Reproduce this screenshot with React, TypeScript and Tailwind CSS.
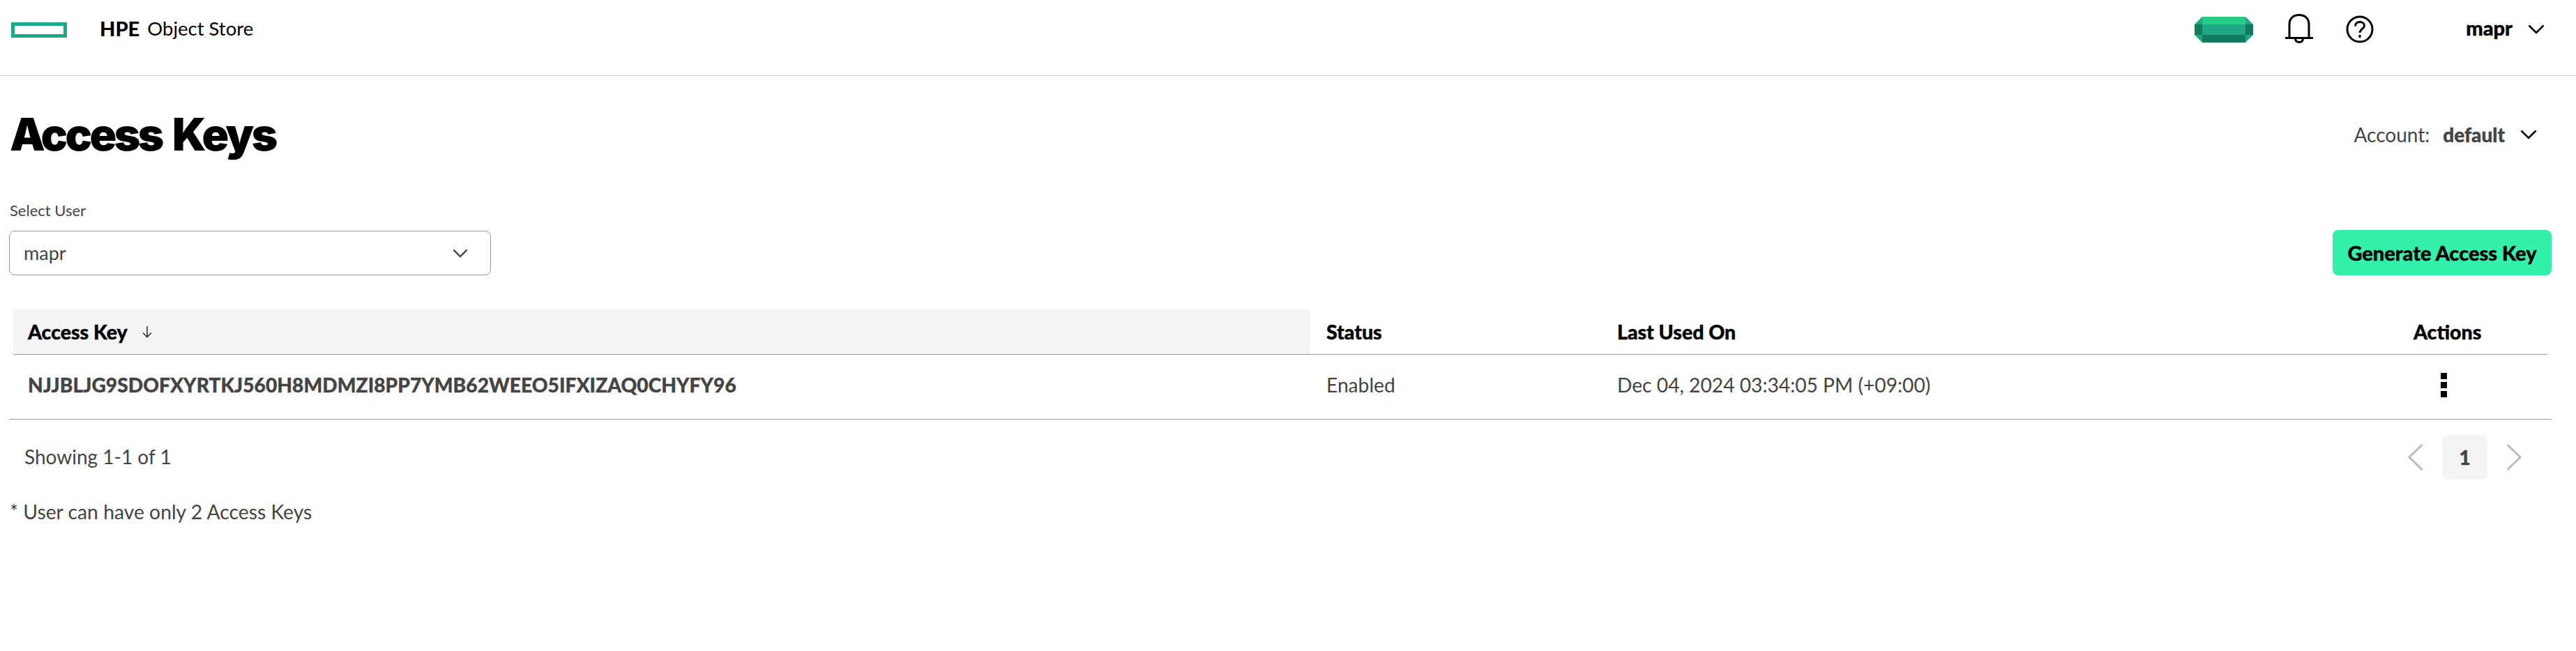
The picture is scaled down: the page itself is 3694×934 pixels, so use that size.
import { useState } from "react";

const BODY = "font-['Lato','Open_Sans',sans-serif]";

function Chevron({ className = "" }: { className?: string }) {
  return (
    <svg viewBox="0 0 24 14" fill="none" stroke="currentColor" strokeWidth="2.6" className={className}>
      <path d="M1.5 1.5 12 12 22.5 1.5" />
    </svg>
  );
}

function Gem() {
  return (
    <svg viewBox="0 0 84 37" className="w-[84px] h-[37px]">
      <polygon points="11,0 73,0 73,11 11,11" fill="#27CB88" />
      <polygon points="11,11 73,11 73,26 11,26" fill="#1FA883" />
      <polygon points="11,26 73,26 73,37 11,37" fill="#127A5E" />
      <polygon points="11,0 11,11 0,11" fill="#1FA883" />
      <polygon points="0,11 11,11 11,26 0,26" fill="#127A5E" />
      <polygon points="0,26 11,26 11,37" fill="#1FA883" />
      <polygon points="73,0 84,11 73,11" fill="#1FA883" />
      <polygon points="73,11 84,11 84,26 73,26" fill="#127A5E" />
      <polygon points="73,26 84,26 73,37" fill="#1FA883" />
    </svg>
  );
}

function Bell() {
  return (
    <svg viewBox="0 0 40 42" fill="none" stroke="#000" strokeWidth="3" className="w-10 h-[42px]">
      <path d="M6 34V15C6 6.5 11.5 1.5 20 1.5S34 6.5 34 15V34" />
      <path d="M0 34.5H40" />
      <path d="M14.5 35C14.5 39 17 40.5 20 40.5S25.5 39 25.5 35" />
    </svg>
  );
}

function Help() {
  return (
    <svg viewBox="0 0 40 40" fill="none" stroke="#000" strokeWidth="3" className="w-10 h-10">
      <circle cx="20" cy="20" r="18" />
      <path d="M13.5 15.5C13.5 11.5 16.5 9.5 20 9.5S26.5 11.5 26.5 15C26.5 19 20 20 20 25" />
      <path d="M20 28V32" />
    </svg>
  );
}

export default function App() {
  const [user] = useState("mapr");

  return (
    <div className={`min-h-[934px] bg-white text-[#444] ${BODY}`}>
      <header className="h-[109px] border-b border-[#ccc] flex items-start text-black">
        <div className="ml-4 mt-8 w-20 h-[22px] border-[5px] border-[#1AAC8A]" />
        <div className="ml-[47px] mt-[21px] text-[29px] leading-[40px] flex">
          <span className="font-black">HPE</span>
          <span className="ml-[11px] text-[27.5px]">Object Store</span>
        </div>
        <div className="ml-auto mt-[20px] flex items-start">
          <div className="mt-1">
            <Gem />
          </div>
          <div className="ml-[46px]">
            <Bell />
          </div>
          <div className="ml-[47px] mt-[2px]">
            <Help />
          </div>
          <span className="ml-[132px] text-[29px] leading-[40px] font-black [-webkit-text-stroke:0.4px]">{user}</span>
          <Chevron className="ml-[22px] mt-[15px] w-6 h-[14px]" />
          <div className="w-[45px]" />
        </div>
      </header>

      <main className="pl-[13px] pr-[35px]">
        <div className="mt-[50px] flex items-center justify-between h-[68px]">
          <h1 className="pl-[1px] text-[64px] leading-[68px] font-black text-black font-['Inter',sans-serif] tracking-[-3.6px] [word-spacing:6px]">
            Access Keys
          </h1>
          <div className="flex items-center text-[28px] pr-[21px]">
            <span>Account:</span>
            <span className="ml-[19px] font-black [-webkit-text-stroke:0.4px]">default</span>
            <Chevron className="ml-[22px] w-6 h-[14px] text-black" />
          </div>
        </div>

        <div className="mt-[61px] flex items-end justify-between">
          <div>
            <label className="block pl-px text-[22px] leading-[28px] mb-[15px]">Select User</label>
            <div className="w-[691px] h-[64px] border border-[#999] rounded-[8px] flex items-center justify-between pl-5 pr-[32px] text-[27px]">
              <span>{user}</span>
              <Chevron className="w-[22px] h-[13px]" />
            </div>
          </div>
          <button className="w-[314px] h-[65px] rounded-[8px] bg-[#33F0AB] text-black text-[29px] font-black [-webkit-text-stroke:0.4px]">
            Generate Access Key
          </button>
        </div>

        <div className="mt-[49px] border-b border-[#999]">
          <div className="ml-[6px] mr-[6px] h-[65px] flex border-b border-[#999] text-[28.5px] font-black text-black [-webkit-text-stroke:0.4px]">
            <div className="w-[1860px] bg-[#f4f4f4] pl-[21px] flex items-center">
              Access Key
              <svg viewBox="0 0 16 18" fill="none" stroke="#333" strokeWidth="1.6" className="ml-[20px] w-4 h-[18px]">
                <path d="M8 1V16M2 10.5 8 16.5 14 10.5" />
              </svg>
            </div>
            <div className="w-[417px] pl-[23px] flex items-center">Status</div>
            <div className="w-[1165px] pl-[23px] flex items-center">Last Used On</div>
            <div className="flex-1 flex items-center">Actions</div>
          </div>
          <div className="ml-[6px] mr-[6px] h-[92px] pb-[6px] flex text-[28.2px]">
            <div className="w-[1860px] pl-[21px] flex items-center font-black [-webkit-text-stroke:0.3px]">
              NJJBLJG9SDOFXYRTKJ560H8MDMZI8PP7YMB62WEEO5IFXIZAQ0CHYFY96
            </div>
            <div className="w-[417px] pl-[23px] flex items-center">Enabled</div>
            <div className="w-[1165px] pl-[23px] flex items-center">Dec 04, 2024 03:34:05 PM (+09:00)</div>
            <div className="flex-1 flex items-center pl-[39px]">
              <div className="flex flex-col gap-1">
                <div className="w-[9px] h-[9px] bg-black" />
                <div className="w-[9px] h-[9px] bg-black" />
                <div className="w-[9px] h-[9px] bg-black" />
              </div>
            </div>
          </div>
        </div>

        <div className="mt-[22px] flex items-center justify-between h-[64px] pl-[22px]">
          <span className="text-[28px] pb-[3px]">Showing 1-1 of 1</span>
          <div className="flex items-center pr-[43px]">
            <svg viewBox="0 0 22 38" fill="none" stroke="#bbb" strokeWidth="3" className="w-[22px] h-[38px]">
              <path d="M20.5 1 2 19 20.5 37" />
            </svg>
            <div className="ml-[27px] w-[65px] h-[64px] rounded-[8px] bg-[#f4f4f4] flex items-center justify-center text-[28px] font-black [-webkit-text-stroke:0.4px]">
              1
            </div>
            <svg viewBox="0 0 22 38" fill="none" stroke="#bbb" strokeWidth="3" className="ml-[27px] w-[22px] h-[38px]">
              <path d="M1.5 1 20 19 1.5 37" />
            </svg>
          </div>
        </div>

        <p className="mt-[28px] pl-px text-[28.3px] leading-[36px]">* User can have only 2 Access Keys</p>
      </main>
    </div>
  );
}
